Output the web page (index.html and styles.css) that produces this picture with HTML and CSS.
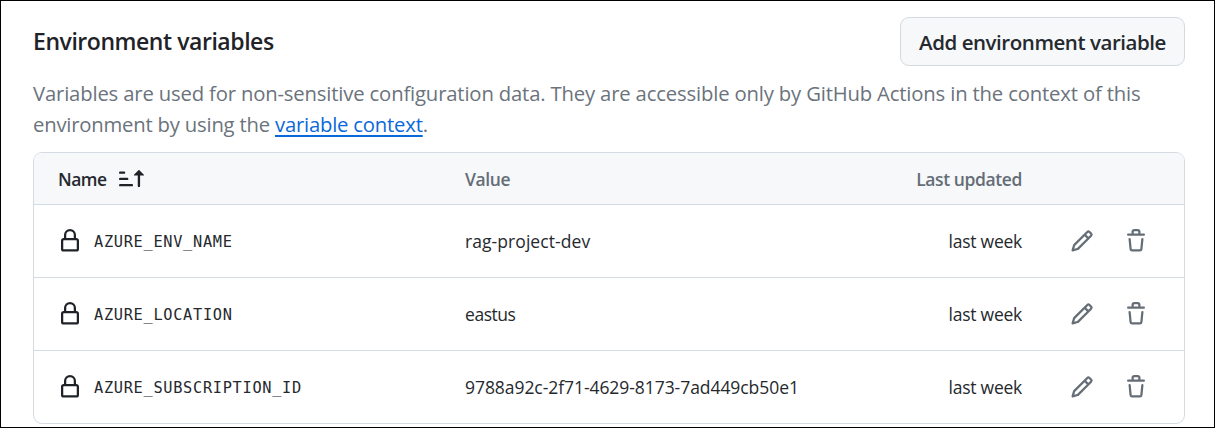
FILE: index.html
```html
<!DOCTYPE html>
<html lang="en">
<head>
<meta charset="utf-8">
<title>Environment variables</title>
<link rel="stylesheet" href="styles.css">
</head>
<body>
<svg class="sprite" aria-hidden="true">
  <symbol id="lock" viewBox="0 0 16 16"><path d="M4 4a4 4 0 0 1 8 0v2h.25c.966 0 1.75.784 1.75 1.75v5.5A1.75 1.75 0 0 1 12.25 15h-8.5A1.75 1.75 0 0 1 2 13.25v-5.5C2 6.784 2.784 6 3.75 6H4Zm8.25 3.5h-8.5a.25.25 0 0 0-.25.25v5.5c0 .138.112.25.25.25h8.5a.25.25 0 0 0 .25-.25v-5.5a.25.25 0 0 0-.25-.25ZM10.5 6V4a2.5 2.5 0 1 0-5 0v2Z"/></symbol>
  <symbol id="pencil" viewBox="0 0 16 16"><path d="M11.013 1.427a1.75 1.75 0 0 1 2.474 0l1.086 1.086a1.75 1.75 0 0 1 0 2.474l-8.61 8.61c-.21.21-.47.364-.756.445l-3.251.93a.75.75 0 0 1-.927-.928l.929-3.25c.081-.286.235-.547.445-.758l8.61-8.61Zm.176 4.823L9.75 4.81l-6.286 6.287a.253.253 0 0 0-.064.108l-.558 1.953 1.953-.558a.253.253 0 0 0 .108-.064Zm1.238-3.763a.25.25 0 0 0-.354 0L10.811 3.75l1.439 1.44 1.263-1.263a.25.25 0 0 0 0-.354Z"/></symbol>
  <symbol id="trash" viewBox="0 0 16 16"><path d="M11 1.75V3h2.25a.75.75 0 0 1 0 1.5H2.75a.75.75 0 0 1 0-1.5H5V1.75C5 .784 5.784 0 6.75 0h2.5C10.216 0 11 .784 11 1.75ZM4.496 6.675l.66 6.6a.25.25 0 0 0 .249.225h5.19a.25.25 0 0 0 .249-.225l.66-6.6a.75.75 0 0 1 1.492.149l-.66 6.6A1.748 1.748 0 0 1 10.595 15h-5.19a1.75 1.75 0 0 1-1.741-1.575l-.66-6.6a.75.75 0 1 1 1.492-.15ZM6.5 1.75V3h3V1.75a.25.25 0 0 0-.25-.25h-2.5a.25.25 0 0 0-.25.25Z"/></symbol>
  <symbol id="sort" viewBox="0 0 16 16"><path d="m12.927 2.573 3 3A.25.25 0 0 1 15.75 6H13.5v6.75a.75.75 0 0 1-1.5 0V6H9.75a.25.25 0 0 1-.177-.427l3-3a.25.25 0 0 1 .354 0ZM0 12.25a.75.75 0 0 1 .75-.75h7.5a.75.75 0 0 1 0 1.5H.75a.75.75 0 0 1-.75-.75Zm0-4a.75.75 0 0 1 .75-.75h4.5a.75.75 0 0 1 0 1.5H.75A.75.75 0 0 1 0 8.25Zm0-4a.75.75 0 0 1 .75-.75h2.5a.75.75 0 0 1 0 1.5H.75A.75.75 0 0 1 0 4.25Z"/></symbol>
</svg>
<main class="panel">
  <header class="top">
    <h2 class="title"><span>Environment variables</span></h2>
    <button class="add"><span>Add environment variable</span></button>
  </header>
  <p class="desc"><span class="line1">Variables are used for non-sensitive configuration data. They are accessible only by GitHub Actions in the context of this</span><br><span class="line2">environment by using the <a class="link" href="#">variable context</a>.</span></p>
  <section class="table">
    <div class="row head">
      <div class="name"><span class="h-name">Name</span><svg class="icon sort"><use href="#sort"/></svg></div>
      <div class="value"><span class="h-value">Value</span></div>
      <div class="updated"><span class="h-updated">Last updated</span></div>
    </div>
    <div class="row">
      <div class="name"><svg class="icon lock"><use href="#lock"/></svg><code class="code">AZURE_ENV_NAME</code></div>
      <div class="value"><span class="v1">rag-project-dev</span></div>
      <div class="updated"><span>last week</span></div>
      <div class="actions"><svg class="icon"><use href="#pencil"/></svg><svg class="icon"><use href="#trash"/></svg></div>
    </div>
    <div class="row">
      <div class="name"><svg class="icon lock"><use href="#lock"/></svg><code class="code">AZURE_LOCATION</code></div>
      <div class="value"><span class="v2">eastus</span></div>
      <div class="updated"><span>last week</span></div>
      <div class="actions"><svg class="icon"><use href="#pencil"/></svg><svg class="icon"><use href="#trash"/></svg></div>
    </div>
    <div class="row">
      <div class="name"><svg class="icon lock"><use href="#lock"/></svg><code class="code">AZURE_SUBSCRIPTION_ID</code></div>
      <div class="value"><span class="v3">9788a92c-2f71-4629-8173-7ad449cb50e1</span></div>
      <div class="updated"><span>last week</span></div>
      <div class="actions"><svg class="icon"><use href="#pencil"/></svg><svg class="icon"><use href="#trash"/></svg></div>
    </div>
  </section>
</main>
</body>
</html>
```
FILE: styles.css
```css
* { box-sizing: border-box; }
body { margin: 0; background: #fff; color: #25292e; font-family: "Open Sans", "Noto Sans", sans-serif; }
.sprite { display: none; }
.panel { height: 428px; border: 1px solid #000; padding: 16px 30px 0 32px; overflow: hidden; }
.top { display: flex; justify-content: space-between; height: 49px; }
.title { margin: 0; font-size: 23px; font-weight: 600; line-height: 49px; letter-spacing: -0.45px; white-space: nowrap; color: #1f2328; }
.add { width: 285px; height: 49px; margin-right: -1px; padding: 0 0 1px; border: 1px solid #d5dae1; border-radius: 9px; background: #f6f8fa; color: #25292e; font: 600 20.5px/47px "Open Sans", sans-serif; letter-spacing: -0.45px; white-space: nowrap; }
.add span { display: block; padding-top: 1px; }
.desc { margin: 12px 0 0; height: 74px; font-size: 20.3px; line-height: 31px; color: #6b737c; letter-spacing: -0.17px; white-space: nowrap; }
.line2 { letter-spacing: -0.21px; }
.link { color: #0969da; text-decoration: underline; text-decoration-thickness: 2px; text-underline-offset: 3px; }
.table { height: 272px; margin-right: -1px; border: 1px solid #d5dbe2; border-radius: 9px; overflow: hidden; }
.row { display: grid; grid-template-columns: 407px 400px 157px 1fr; align-items: center; padding-left: 24px; height: 73px; border-top: 1px solid #d5dbe2; font-size: 17.5px; letter-spacing: -0.25px; white-space: nowrap; }
.head { height: 51px; border-top: 0; background: #f6f8fa; color: #656d76; font-weight: 600; }
.name { display: flex; align-items: center; }
.h-name { color: #25292e; letter-spacing: -0.5px; }
.h-value { letter-spacing: -0.4px; }
.h-updated { letter-spacing: -0.4px; }
.v1 { letter-spacing: 0.07px; }
.v2 { letter-spacing: -0.45px; }
.v3 { letter-spacing: -0.06px; }
.updated { text-align: right; }
.icon { width: 24px; height: 24px; fill: currentColor; }
.sort { width: 25px; height: 25px; margin-left: 12px; color: #1f2328; }
.lock { margin-right: 12px; color: #1f2328; }
.code { padding-top: 2px; font: 15.3px/20px "DejaVu Sans Mono", monospace; letter-spacing: 0.69px; }
.actions { display: flex; gap: 30px; padding-left: 48px; color: #656d76; }
```
